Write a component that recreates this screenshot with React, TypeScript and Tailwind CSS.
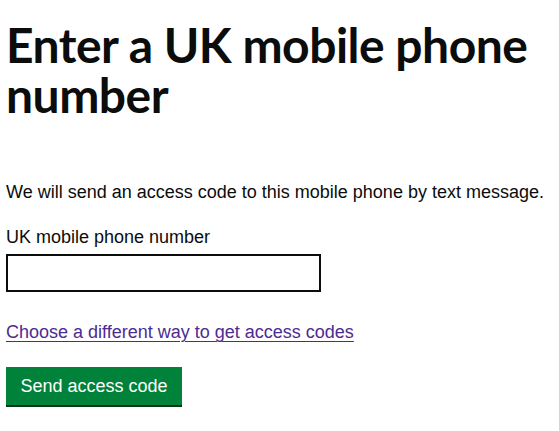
export default function App() {
  return (
    <main className="min-h-[431px] bg-white px-[6px] pt-[20px] text-[#0b0c0c] font-['Liberation_Sans',Arial,sans-serif]">
      <h1 className="max-w-[548px] font-['Lato',sans-serif] text-[48px] font-bold leading-[50px] tracking-[-0.5px]">
        Enter a UK mobile phone number
      </h1>
      <p className="mt-[60px] text-[18px] leading-[25px]">
        We will send an access code to this mobile phone by text message.
      </p>
      <div className="mt-[20px]">
        <label htmlFor="phone" className="block text-[18px] leading-[25px]">
          UK mobile phone number
        </label>
        <input
          id="phone"
          type="text"
          className="mt-[4px] block h-[38px] w-[315px] border-2 border-[#0b0c0c] bg-white px-2 outline-none"
        />
      </div>
      <a href="#" className="mt-[28px] inline-block text-[18px] leading-[25px] text-[#4c2c92] underline underline-offset-[3px] decoration-1">
        Choose a different way to get access codes
      </a>
      <div className="mt-[22px]">
        <button
          type="button"
          className="h-[38px] w-[176px] bg-[#00823b] text-[18px] leading-[25px] text-white shadow-[0_2px_0_#003618]"
        >
          Send access code
        </button>
      </div>
    </main>
  );
}
